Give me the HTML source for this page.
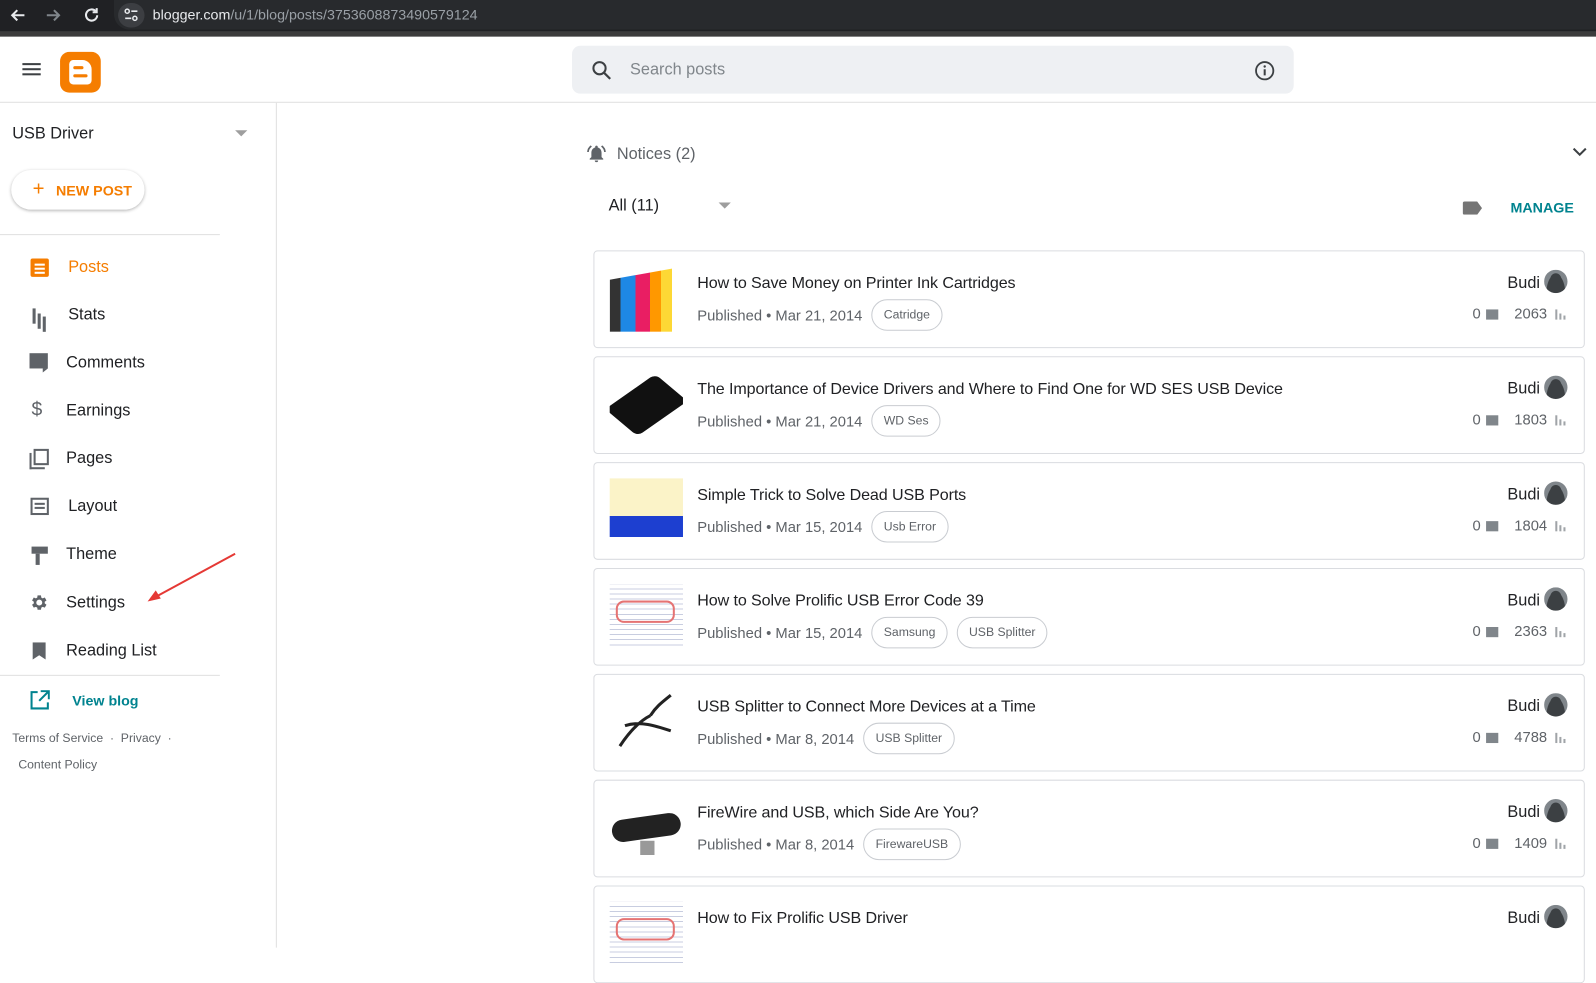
<!DOCTYPE html>
<html><head><meta charset="utf-8"><style>
*{box-sizing:border-box;margin:0;padding:0}
html,body{width:1596px;height:939px;overflow:hidden;background:#fff;font-family:"Liberation Sans",Roboto,sans-serif}
#w{position:absolute;left:0;top:0;width:1568px;height:923px;transform:scale(1.01786);transform-origin:0 0}
.a{position:absolute}
.nav{position:absolute;left:0;font-size:16px;color:#202124}
.card{position:absolute;left:583px;width:974px;height:96px;border:1px solid #dadce0;border-radius:4px;background:#fff}
.card .t{position:absolute;left:101px;top:23px;font-size:15.8px;color:#202124;white-space:nowrap;letter-spacing:-0.1px}
.card .p{position:absolute;left:101px;top:50px;font-size:14.5px;color:#5f6368;white-space:nowrap}
.chip{display:inline-block;border:1px solid #c9ccd1;border-radius:16px;padding:0 11px;height:31px;line-height:29px;font-size:12px;color:#5f6368;margin-left:9px;vertical-align:middle;margin-top:-3px}
.card .th{position:absolute;left:15px;top:15px;width:72px;height:64px;overflow:hidden}
.card .au{position:absolute;right:16px;top:22px;font-size:16px;color:#202124}
.av{display:inline-block;width:23px;height:23px;border-radius:50%;background:radial-gradient(circle at 50% 38%,#3c4043 0 5px,transparent 5.5px),radial-gradient(ellipse at 50% 100%,#3c4043 0 9px,transparent 9.5px),#80868b;vertical-align:middle;margin-left:4px;margin-top:-4px}
.card .st{position:absolute;right:18px;top:54px;font-size:14.5px;color:#5f6368;white-space:nowrap}
.cm{display:inline-block;width:12px;height:10px;background:#80868b;margin:0 16px 0 5px;vertical-align:middle}
.bi{display:inline-block;width:10px;height:10px;margin-left:8px;vertical-align:middle;background:linear-gradient(#a0a4a8,#a0a4a8) 0 0/2px 10px no-repeat,linear-gradient(#a0a4a8,#a0a4a8) 4px 4px/2px 6px no-repeat,linear-gradient(#a0a4a8,#a0a4a8) 8px 6px/2px 4px no-repeat}
</style></head><body><div id="w">
<div class="a" style="left:0;top:0;width:1568px;height:31px;background:#202124"></div>
<div class="a" style="left:0;top:31px;width:1568px;height:5px;background:#3c3c3c"></div>
<div class="a" style="left:112px;top:0;width:1460px;height:29px;background:#282a2d;border-radius:0 0 0 15px"></div>
<svg class="a" style="left:9px;top:6px" width="100" height="18" viewBox="0 0 100 18"><g fill="none" stroke-width="2"><path d="M15 9H3M8 4L3 9l5 5" stroke="#e8eaed"/><path d="M37 9h12M44 4l5 5-5 5" stroke="#80868b"/><path d="M85 5a5.5 5.5 0 1 0 1.5 4" stroke="#e8eaed"/><path d="M86 2v4h-4" stroke="#e8eaed"/></g></svg>
<div class="a" style="left:116px;top:3px;width:26px;height:24px;border-radius:12px;background:#3c3e42"></div>
<svg class="a" style="left:122px;top:8px" width="14" height="14"><g stroke="#e8eaed" stroke-width="1.5" fill="none"><circle cx="3" cy="3" r="2"/><path d="M7 3h6M1 10h6"/><circle cx="10.5" cy="10" r="2"/></g></svg>
<div class="a" style="left:150px;top:6px;font-size:14px;color:#e8eaed">blogger.com<span style="color:#9aa0a6">/u/1/blog/posts/3753608873490579124</span></div>
<div class="a" style="left:0;top:100px;width:1568px;height:1px;background:#e0e0e0"></div>
<div class="a" style="left:22px;top:62px;width:18px;height:2px;background:#3c4043;box-shadow:0 5px 0 #3c4043,0 10px 0 #3c4043"></div>
<div class="a" style="left:59px;top:51px;width:40px;height:40px;border-radius:9px;background:#f57d00"></div>
<div class="a" style="left:68px;top:59px;width:22px;height:24px;border-radius:4px 9px 4px 4px;background:#fff"></div>
<div class="a" style="left:72px;top:65px;width:10px;height:3px;border-radius:2px;background:#f57d00"></div>
<div class="a" style="left:72px;top:73px;width:14px;height:3px;border-radius:2px;background:#f57d00"></div>
<div class="a" style="left:562px;top:45px;width:709px;height:47px;border-radius:8px;background:#eef0f3"></div>
<svg class="a" style="left:580px;top:58px" width="22" height="22"><circle cx="9" cy="9" r="6" stroke="#3c4043" stroke-width="2" fill="none"/><path d="M13.5 13.5l6 6" stroke="#3c4043" stroke-width="2.2"/></svg>
<div class="a" style="left:619px;top:60px;font-size:16px;color:#80868b">Search posts</div>
<svg class="a" style="left:1232px;top:59px" width="21" height="21"><circle cx="10.5" cy="10.5" r="8.5" stroke="#3c4043" stroke-width="1.8" fill="none"/><path d="M10.5 9v6" stroke="#3c4043" stroke-width="2"/><circle cx="10.5" cy="6.3" r="1.2" fill="#3c4043"/></svg>
<div class="a" style="left:271px;top:101px;width:1px;height:830px;background:#e0e0e0"></div>
<div class="a" style="left:12px;top:123px;font-size:16px;color:#202124">USB Driver</div>
<div class="a" style="left:231px;top:128px;border-left:6px solid transparent;border-right:6px solid transparent;border-top:6px solid #9e9e9e"></div>
<div class="a" style="left:11px;top:167px;width:131px;height:39px;border-radius:20px;background:#fff;box-shadow:0 1px 3px rgba(0,0,0,.3)"></div>
<div class="a" style="left:32px;top:176px;font-size:20px;color:#f57d00;line-height:20px">+</div>
<div class="a" style="left:55px;top:179px;font-size:14px;color:#f57d00;font-weight:bold">NEW POST</div>
<div class="a" style="left:0;top:230px;width:216px;height:1px;background:#e0e0e0"></div>
<div class="a" style="left:30px;top:254px;width:18px;height:18px;border-radius:2px;background:#f57d00"></div>
<div class="a" style="left:34px;top:259px;width:10px;height:2px;background:#fff;box-shadow:0 4px 0 #fff,0 8px 0 #fff"></div>
<div class="nav" style="left:67px;top:254px;color:#f57d00">Posts</div>
<div class="a" style="left:32px;top:303px;width:3px;height:15px;background:#5f6368;box-shadow:5px 5px 0 #5f6368,10px 8px 0 #5f6368"></div>
<div class="nav" style="left:67px;top:301px">Stats</div>
<div class="a" style="left:29px;top:347px;width:18px;height:15px;background:#5f6368"></div>
<div class="a" style="left:42px;top:362px;border-left:5px solid #5f6368;border-bottom:4px solid transparent"></div>
<div class="nav" style="left:65px;top:348px">Comments</div>
<div class="a" style="left:31px;top:392px;font-size:19px;color:#5f6368">$</div>
<div class="nav" style="left:65px;top:395px">Earnings</div>
<div class="a" style="left:33px;top:441px;width:15px;height:16px;border:2px solid #5f6368"></div>
<div class="a" style="left:29px;top:445px;width:2px;height:16px;background:#5f6368"></div>
<div class="a" style="left:29px;top:459px;width:15px;height:2px;background:#5f6368"></div>
<div class="nav" style="left:65px;top:442px">Pages</div>
<div class="a" style="left:30px;top:489px;width:18px;height:17px;border:2px solid #5f6368"></div>
<div class="a" style="left:34px;top:494px;width:10px;height:2px;background:#5f6368;box-shadow:0 4px 0 #5f6368"></div>
<div class="nav" style="left:67px;top:489px">Layout</div>
<div class="a" style="left:31px;top:537px;width:16px;height:7px;background:#5f6368"></div>
<div class="a" style="left:35px;top:544px;width:4px;height:11px;background:#5f6368"></div>
<div class="nav" style="left:65px;top:536px">Theme</div>
<svg class="a" style="left:28px;top:582px" width="20" height="20" viewBox="0 0 24 24"><path fill="#5f6368" d="M19.1 12.9a7 7 0 0 0 0-1.8l2.1-1.6-2-3.5-2.5 1a7 7 0 0 0-1.6-.9L14.7 3.5h-4l-.4 2.6a7 7 0 0 0-1.6.9l-2.5-1-2 3.5 2.1 1.6a7 7 0 0 0 0 1.8l-2.1 1.6 2 3.5 2.5-1a7 7 0 0 0 1.6.9l.4 2.6h4l.4-2.6a7 7 0 0 0 1.6-.9l2.5 1 2-3.5zM12.7 15.5a3.5 3.5 0 1 1 0-7 3.5 3.5 0 0 1 0 7z"/></svg>
<div class="nav" style="left:65px;top:584px">Settings</div>
<div class="a" style="left:32px;top:631px;width:13px;height:17px;background:#5f6368;clip-path:polygon(0 0,100% 0,100% 100%,50% 75%,0 100%)"></div>
<div class="nav" style="left:65px;top:631px">Reading List</div>
<div class="a" style="left:0;top:663px;width:216px;height:1px;background:#e0e0e0"></div>
<svg class="a" style="left:29px;top:678px" width="20" height="20"><path d="M8 2H2v16h16v-6" fill="none" stroke="#00838f" stroke-width="2"/><path d="M11 1h8v8M18.5 1.5l-9 9" fill="none" stroke="#00838f" stroke-width="2"/></svg>
<div class="a" style="left:71px;top:680px;font-size:14px;font-weight:bold;color:#00838f">View blog</div>
<div class="a" style="left:12px;top:718px;font-size:12px;color:#5f6368">Terms of Service &nbsp;·&nbsp; Privacy &nbsp;·</div>
<div class="a" style="left:18px;top:744px;font-size:12px;color:#5f6368">Content Policy</div>
<svg class="a" style="left:140px;top:540px" width="96" height="56"><path d="M91 4L10 48" stroke="#e53935" stroke-width="2"/><path d="M5 51l13-3-5-8z" fill="#e53935"/></svg>
<svg class="a" style="left:576px;top:141px" width="20" height="20" viewBox="0 0 24 24"><path fill="#5f6368" d="M12 22a2 2 0 0 0 2-2h-4a2 2 0 0 0 2 2zm6-6v-5c0-3.1-1.6-5.6-4.5-6.3V4a1.5 1.5 0 0 0-3 0v.7C7.6 5.4 6 7.9 6 11v5l-2 2v1h16v-1zM6.6 3.6 5.2 2.2A10.4 10.4 0 0 0 1 10h2a8.4 8.4 0 0 1 3.6-6.4zM21 10h2a10.4 10.4 0 0 0-4.2-7.8l-1.4 1.4A8.4 8.4 0 0 1 21 10z"/></svg>
<div class="a" style="left:606px;top:143px;font-size:16px;color:#5f6368">Notices (2)</div>
<svg class="a" style="left:1545px;top:144px" width="14" height="10"><path d="M1 2l6 6 6-6" stroke="#3c4043" stroke-width="2" fill="none"/></svg>
<div class="a" style="left:598px;top:194px;font-size:16px;color:#202124">All (11)</div>
<div class="a" style="left:706px;top:199px;border-left:6px solid transparent;border-right:6px solid transparent;border-top:6px solid #9e9e9e"></div>
<div class="a" style="left:1437px;top:198px;width:19px;height:13px;background:#757575;border-radius:2px;clip-path:polygon(0 0,75% 0,100% 50%,75% 100%,0 100%)"></div>
<div class="a" style="left:1484px;top:196px;font-size:14px;font-weight:bold;color:#00838f">MANAGE</div>

<div class="card" style="top:246px"><div class="th" style="background:linear-gradient(90deg,#333 0 15%,#1e88e5 15% 35%,#e91e63 35% 55%,#ff9800 55% 70%,#fdd835 70% 85%,#fff 85%);clip-path:polygon(0 20%,100% 0,100% 100%,0 100%)"></div><div class="t">How to Save Money on Printer Ink Cartridges</div><div class="p">Published • Mar 21, 2014<span class="chip">Catridge</span></div><div class="au">Budi<span class="av"></span></div><div class="st">0<span class="cm"></span>2063<span class="bi"></span></div></div>
<div class="card" style="top:350px"><div class="th"><div style="position:absolute;left:6px;top:12px;width:60px;height:40px;background:#111;border-radius:6px;transform:rotate(-35deg) skewX(15deg)"></div></div><div class="t">The Importance of Device Drivers and Where to Find One for WD SES USB Device</div><div class="p">Published • Mar 21, 2014<span class="chip">WD Ses</span></div><div class="au">Budi<span class="av"></span></div><div class="st">0<span class="cm"></span>1803<span class="bi"></span></div></div>
<div class="card" style="top:454px"><div class="th" style="background:linear-gradient(#fbf3c8 0 58%,#1d3fd0 58% 90%,#fff 90%)"></div><div class="t">Simple Trick to Solve Dead USB Ports</div><div class="p">Published • Mar 15, 2014<span class="chip">Usb Error</span></div><div class="au">Budi<span class="av"></span></div><div class="st">0<span class="cm"></span>1804<span class="bi"></span></div></div>
<div class="card" style="top:558px"><div class="th" style="background:repeating-linear-gradient(#fff 0 4px,#c8cde0 4px 5px)"><div style="position:absolute;left:6px;top:16px;width:58px;height:22px;border:2px solid #e57373;border-radius:8px"></div></div><div class="t">How to Solve Prolific USB Error Code 39</div><div class="p">Published • Mar 15, 2014<span class="chip">Samsung</span><span class="chip">USB Splitter</span></div><div class="au">Budi<span class="av"></span></div><div class="st">0<span class="cm"></span>2363<span class="bi"></span></div></div>
<div class="card" style="top:662px"><div class="th"><svg width="72" height="64"><path d="M10 55C20 40 30 30 40 25M15 35c15-5 30 0 45 5M40 25c5-8 10-12 20-20" stroke="#222" stroke-width="3" fill="none"/></svg></div><div class="t">USB Splitter to Connect More Devices at a Time</div><div class="p">Published • Mar 8, 2014<span class="chip">USB Splitter</span></div><div class="au">Budi<span class="av"></span></div><div class="st">0<span class="cm"></span>4788<span class="bi"></span></div></div>
<div class="card" style="top:766px"><div class="th"><div style="position:absolute;left:2px;top:20px;width:68px;height:22px;background:#222;border-radius:11px;transform:rotate(-8deg)"></div><div style="position:absolute;left:30px;top:44px;width:14px;height:14px;background:#999"></div></div><div class="t">FireWire and USB, which Side Are You?</div><div class="p">Published • Mar 8, 2014<span class="chip">FirewareUSB</span></div><div class="au">Budi<span class="av"></span></div><div class="st">0<span class="cm"></span>1409<span class="bi"></span></div></div>
<div class="card" style="top:870px"><div class="th" style="background:repeating-linear-gradient(#fff 0 4px,#c8cde0 4px 5px)"><div style="position:absolute;left:6px;top:16px;width:58px;height:22px;border:2px solid #e57373;border-radius:8px"></div></div><div class="t">How to Fix Prolific USB Driver</div><div class="au">Budi<span class="av"></span></div></div>
</div></body></html>
